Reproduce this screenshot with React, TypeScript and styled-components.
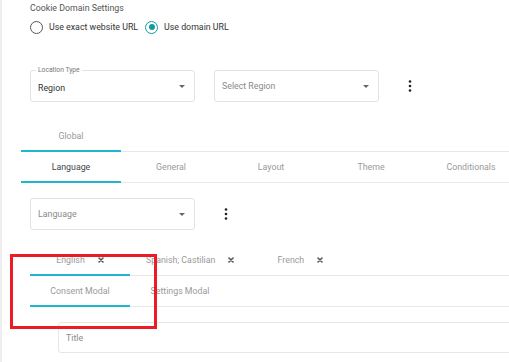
import React from 'react';
import styled, { createGlobalStyle, css } from 'styled-components';

const teal = '#1fb6cf';
const radioTeal = '#16999c';

const GlobalStyle = createGlobalStyle`
  html, body {
    margin: 0;
    padding: 0;
    background: #fff;
  }
  body {
    font-family: Roboto, "Liberation Sans", Arial, sans-serif;
    -webkit-font-smoothing: antialiased;
  }
`;

const Page = styled.div`
  position: relative;
  box-sizing: border-box;
  width: 509px;
  height: 362px;
  overflow: hidden;
  border-left: 2px solid #ededed;
  background: #fff;
`;

const Section = styled.div<{ $top: number; $left?: number }>`
  margin-top: ${(p) => p.$top}px;
  padding-left: ${(p) => p.$left ?? 28}px;
`;

const Heading = styled.div`
  font-size: 8.8px;
  line-height: 12px;
  color: #555;
`;

const RadioGroup = styled.div`
  display: flex;
  align-items: center;
  height: 14px;
  margin-top: 6px;
`;

const RadioOption = styled.label`
  display: flex;
  align-items: center;
  gap: 6px;
  margin-right: 7px;
  font-size: 8.8px;
  color: #333;
`;

const RadioCircle = styled.span<{ $checked?: boolean }>`
  position: relative;
  box-sizing: border-box;
  width: 13px;
  height: 13px;
  border-radius: 50%;
  border: 1.5px solid ${(p) => (p.$checked ? radioTeal : '#555')};
  ${(p) =>
    p.$checked &&
    css`
      &::after {
        content: '';
        position: absolute;
        left: 50%;
        top: 50%;
        width: 6px;
        height: 6px;
        margin: -3px 0 0 -3px;
        border-radius: 50%;
        background: ${radioTeal};
      }
    `}
`;

const FieldRow = styled.div`
  display: flex;
  align-items: center;
  gap: 19px;
`;

const SelectBox = styled.div<{ $width?: number }>`
  position: relative;
  box-sizing: border-box;
  display: flex;
  align-items: center;
  justify-content: space-between;
  flex: none;
  width: ${(p) => p.$width ?? 165}px;
  height: 32px;
  padding: 0 9px 0 7px;
  border: 1px solid #e3e3e3;
  border-radius: 3px;
  background: #fff;
`;

const SelectValue = styled.span<{ $placeholder?: boolean }>`
  font-size: 8.8px;
  color: ${(p) => (p.$placeholder ? '#8a8a8a' : '#333')};
  margin-top: ${(p) => (p.$placeholder ? 0 : 4)}px;
`;

const Legend = styled.span`
  position: absolute;
  left: 5px;
  top: -5px;
  padding: 0 2px;
  background: #fff;
  font-size: 6.7px;
  line-height: 9px;
  color: #777;
`;

const Caret = styled.span`
  width: 0;
  height: 0;
  border-left: 3.5px solid transparent;
  border-right: 3.5px solid transparent;
  border-top: 3.5px solid #666;
`;

const KebabButton = styled.span`
  display: flex;
  margin-left: 10px;
`;

const Kebab = () => (
  <KebabButton>
    <svg width="4" height="12" viewBox="0 0 4 12">
      <circle cx="2" cy="1.5" r="1.3" fill="#222" />
      <circle cx="2" cy="6" r="1.3" fill="#222" />
      <circle cx="2" cy="10.5" r="1.3" fill="#222" />
    </svg>
  </KebabButton>
);

const TabBar = styled.div<{ $left: number }>`
  display: flex;
  height: 30px;
  margin-left: ${(p) => p.$left}px;
  border-bottom: 1px solid #e8e8e8;
`;

const Tab = styled.div<{ $active?: boolean; $strong?: boolean }>`
  position: relative;
  box-sizing: border-box;
  display: flex;
  align-items: center;
  justify-content: center;
  gap: 13px;
  flex: none;
  min-width: 100px;
  padding: 0 16px;
  font-size: 8.8px;
  color: ${(p) => (p.$strong ? '#444' : '#9a9a9a')};
  white-space: nowrap;
  ${(p) =>
    p.$active &&
    css`
      &::after {
        content: '';
        position: absolute;
        left: 0;
        right: 0;
        bottom: -1px;
        height: 2px;
        background: ${teal};
      }
    `}
`;

const CloseIcon = () => (
  <svg width="6" height="6" viewBox="0 0 6 6">
    <path d="M1 1 L5 5 M5 1 L1 5" stroke="#555" strokeWidth="1.6" strokeLinecap="round" />
  </svg>
);

const TextInput = styled.div`
  box-sizing: border-box;
  display: flex;
  align-items: center;
  width: 480px;
  height: 31px;
  padding-left: 7px;
  border: 1px solid #e6e6e6;
  border-radius: 3px;
  font-size: 8.8px;
  color: #8a8a8a;
`;

const Annotation = styled.div`
  position: absolute;
  left: 8px;
  top: 254px;
  width: 147px;
  height: 75px;
  box-sizing: border-box;
  border: 3.5px solid #ec1c24;
  pointer-events: none;
`;

const mainTabs = ['Language', 'General', 'Layout', 'Theme', 'Conditionals'];
const languages = ['English', 'Spanish; Castilian', 'French'];

export default function App() {
  return (
    <>
      <GlobalStyle />
      <Page>
        <Section $top={2}>
          <Heading>Cookie Domain Settings</Heading>
          <RadioGroup>
            <RadioOption>
              <RadioCircle />
              Use exact website URL
            </RadioOption>
            <RadioOption>
              <RadioCircle $checked />
              Use domain URL
            </RadioOption>
          </RadioGroup>
        </Section>

        <Section $top={36}>
          <FieldRow>
            <SelectBox>
              <Legend>Location Type</Legend>
              <SelectValue>Region</SelectValue>
              <Caret />
            </SelectBox>
            <SelectBox>
              <SelectValue $placeholder>Select Region</SelectValue>
              <Caret />
            </SelectBox>
            <Kebab />
          </FieldRow>
        </Section>

        <Section $top={19} $left={0}>
          <TabBar $left={19}>
            <Tab $active>Global</Tab>
          </TabBar>
          <TabBar $left={19}>
            {mainTabs.map((t, i) => (
              <Tab key={t} $active={i === 0} $strong={i === 0}>
                {t}
              </Tab>
            ))}
          </TabBar>
        </Section>

        <Section $top={15}>
          <FieldRow>
            <SelectBox>
              <SelectValue $placeholder>Language</SelectValue>
              <Caret />
            </SelectBox>
            <Kebab />
          </FieldRow>
        </Section>

        <Section $top={15} $left={0}>
          <TabBar $left={28}>
            {languages.map((l, i) => (
              <Tab key={l} $active={i === 0}>
                {l}
                <CloseIcon />
              </Tab>
            ))}
          </TabBar>
          <TabBar $left={28}>
            <Tab $active>Consent Modal</Tab>
            <Tab>Settings Modal</Tab>
          </TabBar>
        </Section>

        <Section $top={15} $left={56}>
          <TextInput>Title</TextInput>
        </Section>

        <Annotation />
      </Page>
    </>
  );
}
